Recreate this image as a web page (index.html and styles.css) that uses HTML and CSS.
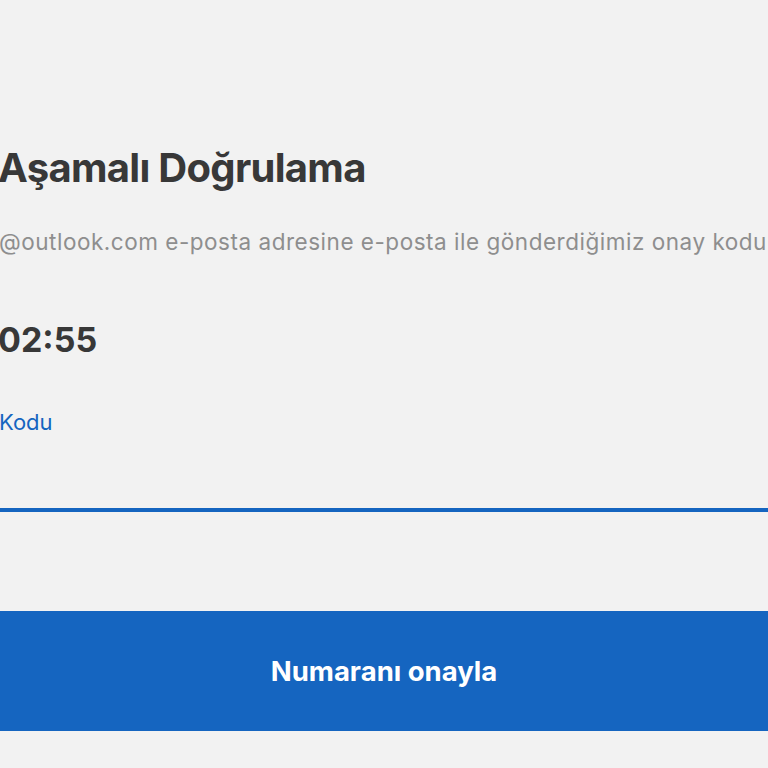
FILE: index.html
```html
<!DOCTYPE html>
<html lang="tr">
<head>
<meta charset="utf-8">
<title>Doğrulama</title>
<link rel="stylesheet" href="styles.css">
</head>
<body>
<main class="page">
  <h1 class="title">Aşamalı Doğrulama</h1>
  <p class="subtitle">@outlook.com e-posta adresine e-posta ile gönderdiğimiz onay kodunu gir</p>
  <div class="timer">02:55</div>
  <label class="field">
    <span class="field-label">Kodu</span>
    <span class="field-input"></span>
  </label>
  <button class="btn" type="button">Numaranı onayla</button>
</main>
</body>
</html>
```

FILE: styles.css
```css
html, body {
  margin: 0;
  padding: 0;
  background: #f2f2f2;
  overflow: hidden;
  width: 768px;
  height: 768px;
}
.page {
  font-family: Inter, "Noto Sans", "Liberation Sans", sans-serif;
  padding-top: 144px;
  display: flex;
  flex-direction: column;
}
.title {
  margin: 0 0 0 -2px;
  font-size: 40px;
  line-height: 48px;
  font-weight: 700;
  color: #383838;
  letter-spacing: -0.7px;
  white-space: nowrap;
}
.subtitle {
  margin: 35px 0 0 -1px;
  font-size: 22.5px;
  line-height: 30px;
  color: #8e8e8e;
  letter-spacing: 0.52px;
  white-space: nowrap;
}
.timer {
  margin: 61px 0 0 -2px;
  font-size: 34px;
  line-height: 44px;
  font-weight: 700;
  color: #383838;
}
.field {
  display: flex;
  flex-direction: column;
  margin-top: 46px;
}
.field-label {
  font-size: 22px;
  line-height: 28px;
  color: #1565c0;
  margin-left: -1px;
}
.field-input {
  display: block;
  height: 72px;
  border-bottom: 4px solid #1565c0;
}
.btn {
  margin-top: 99px;
  height: 120px;
  width: 100%;
  border: 0;
  background: #1565c0;
  color: #ffffff;
  font-family: inherit;
  font-size: 27.5px;
  font-weight: 700;
  letter-spacing: 0;
}
```
